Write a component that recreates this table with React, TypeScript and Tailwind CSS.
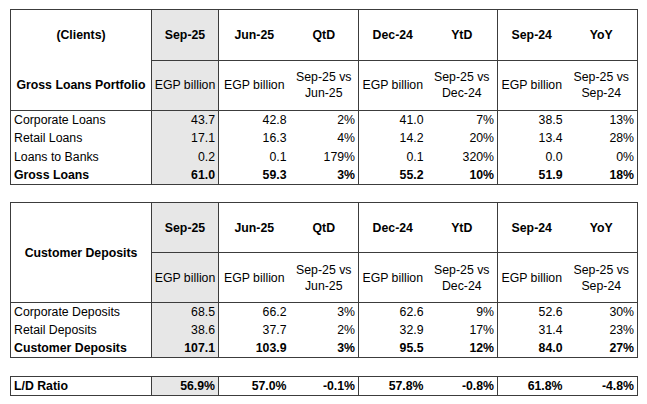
import React from 'react';

type Row = { label: string; values: string[]; bold?: boolean };

const LOANS: Row[] = [
  { label: 'Corporate Loans', values: ['43.7', '42.8', '2%', '41.0', '7%', '38.5', '13%'] },
  { label: 'Retail Loans', values: ['17.1', '16.3', '4%', '14.2', '20%', '13.4', '28%'] },
  { label: 'Loans to Banks', values: ['0.2', '0.1', '179%', '0.1', '320%', '0.0', '0%'] },
  { label: 'Gross Loans', values: ['61.0', '59.3', '3%', '55.2', '10%', '51.9', '18%'], bold: true }
];

const DEPOSITS: Row[] = [
  { label: 'Corporate Deposits', values: ['68.5', '66.2', '3%', '62.6', '9%', '52.6', '30%'] },
  { label: 'Retail Deposits', values: ['38.6', '37.7', '2%', '32.9', '17%', '31.4', '23%'] },
  { label: 'Customer Deposits', values: ['107.1', '103.9', '3%', '95.5', '12%', '84.0', '27%'], bold: true }
];

const RATIO: Row = { label: 'L/D Ratio', values: ['56.9%', '57.0%', '-0.1%', '57.8%', '-0.8%', '61.8%', '-4.8%'], bold: true };

const PERIODS = ['Sep-25', 'Jun-25', 'QtD', 'Dec-24', 'YtD', 'Sep-24', 'YoY'];
const UNITS: string[][] = [
  ['EGP billion'],
  ['EGP billion'],
  ['Sep-25 vs', 'Jun-25'],
  ['EGP billion'],
  ['Sep-25 vs', 'Dec-24'],
  ['EGP billion'],
  ['Sep-25 vs', 'Sep-24']
];

// columns that start a new group get a left rule
const GROUP_START = [true, true, false, true, false, true, false];

function Cols() {
  return (
    <colgroup>
      <col className="w-[141px]" />
      <col className="w-[67px]" />
      <col className="w-[71px]" />
      <col className="w-[69px]" />
      <col className="w-[68px]" />
      <col className="w-[71px]" />
      <col className="w-[68px]" />
      <col className="w-[72px]" />
    </colgroup>
  );
}

function cellCls(i: number) {
  return `${GROUP_START[i] ? 'border-l border-[#3c3c3c]' : ''} ${i === 0 ? 'bg-[#e7e7e7]' : ''}`;
}

function Header({ top, bottom, single }: { top?: string; bottom?: string; single?: string }) {
  return (
    <thead>
      <tr className="h-[50px]">
        <th rowSpan={2} className="p-0 font-bold align-middle border-b border-[#3c3c3c]">
          {single ? (
            <span>{single}</span>
          ) : (
            <div className="flex flex-col h-[100px]">
              <div className="h-[50px] flex items-center justify-center">{top}</div>
              <div className="h-[50px] flex items-center justify-center">{bottom}</div>
            </div>
          )}
        </th>
        {PERIODS.map((p, i) => (
          <th key={p} className={`p-0 font-bold text-center border-b border-[#3c3c3c] ${cellCls(i)}`}>
            {p}
          </th>
        ))}
      </tr>
      <tr className="h-[50px]">
        {UNITS.map((u, i) => (
          <td key={i} className={`p-0 text-center leading-[16px] border-b border-[#3c3c3c] ${cellCls(i)}`}>
            {u.map((line) => (
              <div key={line}>{line}</div>
            ))}
          </td>
        ))}
      </tr>
    </thead>
  );
}

function DataRow({ row }: { row: Row }) {
  return (
    <tr className={`h-[18px] ${row.bold ? 'font-bold' : ''}`}>
      <td className="p-0 pl-[3px] whitespace-nowrap">{row.label}</td>
      {row.values.map((v, i) => (
        <td key={i} className={`p-0 pr-[3px] text-right ${cellCls(i)}`}>
          {v}
        </td>
      ))}
    </tr>
  );
}

const TABLE = 'table-fixed border-collapse border border-[#3c3c3c] w-[627px] leading-[18px]';

export default function App() {
  return (
    <div
      className="w-[647px] h-[404px] bg-white text-black text-[12.3px] pt-[9px] pl-[10px] flex flex-col gap-[18px]"
      style={{ fontFamily: '"Liberation Sans", Arial, sans-serif' }}
    >
      <table className={TABLE}>
        <Cols />
        <Header top="(Clients)" bottom="Gross Loans Portfolio" />
        <tbody>
          {LOANS.map((r) => (
            <DataRow key={r.label} row={r} />
          ))}
        </tbody>
      </table>

      <table className={TABLE}>
        <Cols />
        <Header single="Customer Deposits" />
        <tbody>
          {DEPOSITS.map((r) => (
            <DataRow key={r.label} row={r} />
          ))}
        </tbody>
      </table>

      <table className={TABLE}>
        <Cols />
        <tbody>
          <DataRow row={RATIO} />
        </tbody>
      </table>
    </div>
  );
}
